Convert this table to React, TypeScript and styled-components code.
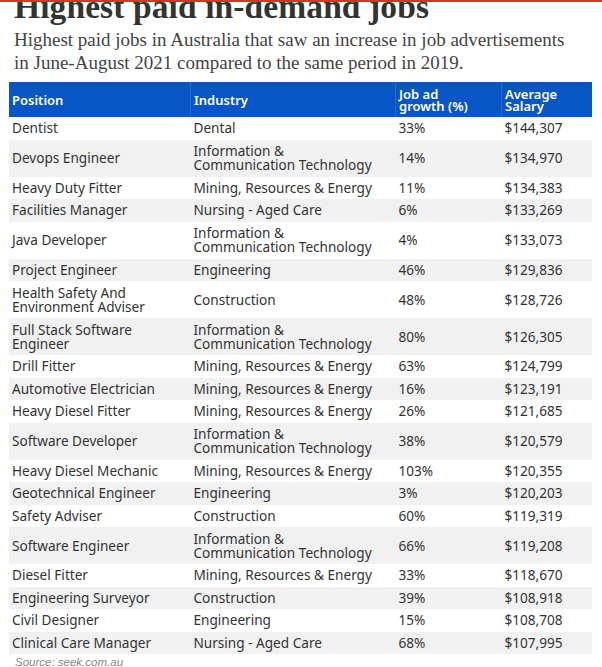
import React from 'react'
import styled, { createGlobalStyle } from 'styled-components'

const GlobalStyle = createGlobalStyle`
  html, body {
    margin: 0;
    padding: 0;
    background: #fff;
    overflow: hidden;
  }
`

const Page = styled.div`
  width: 602px;
  height: 667px;
  overflow: hidden;
  border-top: 2px solid #e0302a;
  box-sizing: border-box;
  padding: 0 13px 0 9px;
`

const Title = styled.h1`
  margin: -12px 0 0 5px;
  font-family: 'Liberation Serif', Georgia, serif;
  font-weight: 700;
  font-size: 33.5px;
  line-height: 34px;
  color: #333;
  letter-spacing: 0.1px;
`

const Subtitle = styled.p`
  margin: 4px 0 8px 5px;
  font-family: 'Liberation Serif', Georgia, serif;
  font-size: 19px;
  line-height: 23px;
  color: #444;
`

const Table = styled.table`
  width: 580px;
  border-collapse: collapse;
  table-layout: fixed;
  font-family: 'Noto Sans', 'Open Sans', sans-serif;
  font-size: 13.6px;
  color: #333;
`

const HeadRow = styled.tr`
  height: 35px;
  background: #0856c6;
`

const HeadCell = styled.th<{ $w: number }>`
  width: ${p => p.$w - 6}px;
  padding: 0 3px;
  color: #fff;
  font-weight: 600;
  font-size: 13px;
  text-align: left;
  vertical-align: middle;
  line-height: 12px;
  white-space: pre-line;
  border-left: 1px solid rgba(255, 255, 255, 0.12);
  &:first-child {
    border-left: none;
  }
`

const Row = styled.tr<{ $tall: boolean; $shade: boolean }>`
  height: ${p => (p.$tall ? 37 : 22.5)}px;
  background: ${p => (p.$shade ? '#f1f1f2' : '#fff')};
`

const Cell = styled.td`
  padding: 0 3px;
  vertical-align: middle;
  line-height: 14px;
  white-space: pre-line;
  overflow: hidden;
`

const Source = styled.div`
  margin: 2px 0 0 6px;
  font-family: 'Liberation Sans', Arial, sans-serif;
  font-style: italic;
  font-size: 11.5px;
  color: #888;
`

const ICT = 'Information &\nCommunication Technology'
const MRE = 'Mining, Resources & Energy'

const jobs: [string, string, string, string][] = [
  ['Dentist', 'Dental', '33%', '$144,307'],
  ['Devops Engineer', ICT, '14%', '$134,970'],
  ['Heavy Duty Fitter', MRE, '11%', '$134,383'],
  ['Facilities Manager', 'Nursing - Aged Care', '6%', '$133,269'],
  ['Java Developer', ICT, '4%', '$133,073'],
  ['Project Engineer', 'Engineering', '46%', '$129,836'],
  ['Health Safety And\nEnvironment Adviser', 'Construction', '48%', '$128,726'],
  ['Full Stack Software\nEngineer', ICT, '80%', '$126,305'],
  ['Drill Fitter', MRE, '63%', '$124,799'],
  ['Automotive Electrician', MRE, '16%', '$123,191'],
  ['Heavy Diesel Fitter', MRE, '26%', '$121,685'],
  ['Software Developer', ICT, '38%', '$120,579'],
  ['Heavy Diesel Mechanic', MRE, '103%', '$120,355'],
  ['Geotechnical Engineer', 'Engineering', '3%', '$120,203'],
  ['Safety Adviser', 'Construction', '60%', '$119,319'],
  ['Software Engineer', ICT, '66%', '$119,208'],
  ['Diesel Fitter', MRE, '33%', '$118,670'],
  ['Engineering Surveyor', 'Construction', '39%', '$108,918'],
  ['Civil Designer', 'Engineering', '15%', '$108,708'],
  ['Clinical Care Manager', 'Nursing - Aged Care', '68%', '$107,995'],
]

export default function App() {
  return (
    <Page>
      <GlobalStyle />
      <Title>Highest paid in-demand jobs</Title>
      <Subtitle>
        Highest paid jobs in Australia that saw an increase in job advertisements
        <br />
        in June-August 2021 compared to the same period in 2019.
      </Subtitle>
      <Table>
        <thead>
          <HeadRow>
            <HeadCell $w={181}>Position</HeadCell>
            <HeadCell $w={204}>Industry</HeadCell>
            <HeadCell $w={105}>{'Job ad\ngrowth (%)'}</HeadCell>
            <HeadCell $w={90}>{'Average\nSalary'}</HeadCell>
          </HeadRow>
        </thead>
        <tbody>
          {jobs.map((j, i) => (
            <Row key={j[0]} $shade={i % 2 === 1} $tall={j[0].includes('\n') || j[1].includes('\n')}>
              {j.map((v, k) => (
                <Cell key={k}>{v}</Cell>
              ))}
            </Row>
          ))}
        </tbody>
      </Table>
      <Source>Source: seek.com.au</Source>
    </Page>
  )
}
